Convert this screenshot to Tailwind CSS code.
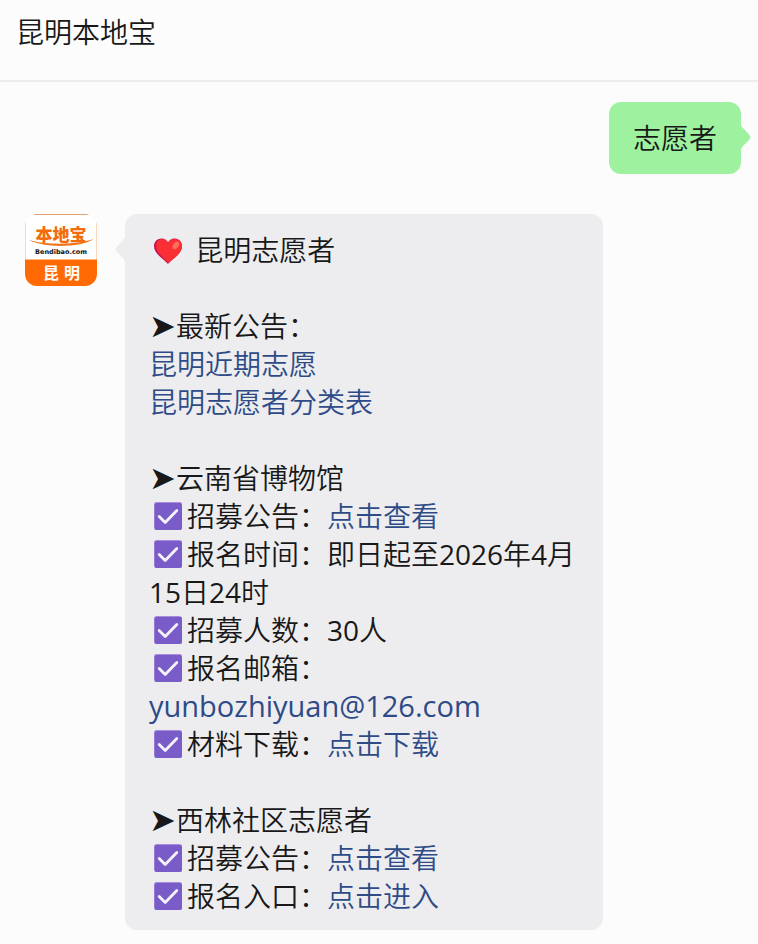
<!DOCTYPE html>
<html lang="zh-CN">
<head>
  <meta charset="UTF-8">
  <meta name="viewport" content="width=device-width, initial-scale=1.0">
  <title>昆明本地宝</title>
  <script src="https://cdn.jsdelivr.net/npm/@tailwindcss/browser@4"></script>
</head>
<body class="bg-[#fcfcfc] min-h-screen text-[#181818] text-[28px] leading-[38px] font-[350] font-['Open_Sans','Noto_Sans_CJK_SC',sans-serif]">

  <!-- Shared icons -->
  <svg class="hidden">
    <symbol id="check" viewBox="0 0 28 28">
      <rect width="28" height="28" rx="2.5" fill="#a98be0"/>
      <rect x="0.6" y="1" width="27.4" height="27" rx="2.2" fill="#7a5cc8"/>
      <path d="M5.200 14.500l6 6L22.800 8.500" fill="none" stroke="#f5f3fa" stroke-width="2.800" stroke-linecap="round" stroke-linejoin="round"/>
    </symbol>
  </svg>

  <header class="border-b-2 border-[#ededed] px-4 pt-[13px] pb-[29px]">
    <h1 class="font-[350]">昆明本地宝</h1>
  </header>

  <main class="pt-5 pb-3.5">

    <!-- Sent message -->
    <div class="flex justify-end pr-[17px]">
      <div class="relative bg-[#9ef29f] rounded-xl px-6 py-[17px]">
        志愿者
        <svg class="absolute left-full top-[22px] -ml-px w-[11px] h-7" viewBox="0 0 11 28" fill="#9ef29f">
          <path d="M0 0C1 2 2 3 4 5L9 10.500C11 12.500 11 14 9 16L3.500 21.500C1.500 23.500 1 25 0 28Z"/>
        </svg>
      </div>
    </div>

    <!-- Reply -->
    <div class="flex items-start gap-7 mt-10 pl-[25px] pr-[155px]">
      <svg class="shrink-0 size-[72px] rounded-xl" viewBox="0 0 72 72" role="img" aria-label="本地宝 昆明">
        <rect width="72" height="72" fill="#fff"/>
        <path d="M0.500 8V46M71.500 8V46" stroke="#f8d8c0"/>
        <path d="M8 0.500H64" stroke="#e0a070"/>
        <rect y="45.500" width="72" height="26.500" fill="#ff6a05"/>
        <text x="36" y="27" text-anchor="middle" font-family="Noto Sans CJK SC, sans-serif" font-weight="900" font-size="17" fill="#f36c0c">本地宝</text>
        <path d="M4 26C20 31 52 31 69 25C56 33.500 20 34.500 4 26Z" fill="#f07418"/>
        <text x="36" y="39.500" text-anchor="middle" font-family="DejaVu Sans, sans-serif" font-weight="700" font-size="6.5" fill="#111">Bendibao.com</text>
        <text x="26" y="65" text-anchor="middle" font-family="Noto Sans CJK SC, sans-serif" font-weight="700" font-size="16" fill="#fff">昆</text>
        <text x="47" y="65" text-anchor="middle" font-family="Noto Sans CJK SC, sans-serif" font-weight="700" font-size="16" fill="#fff">明</text>
      </svg>

      <div class="relative flex-1 min-w-0 bg-[#ededef] rounded-xl px-6 pt-[17px] pb-[15px]">
        <svg class="absolute right-full top-[22px] -mr-px w-[11px] h-7" viewBox="0 0 11 28" fill="#ededef">
          <path d="M11 0C10 2 9 3 7 5L2 10.500C0 12.500 0 14 2 16L7.500 21.500C9.500 23.500 10 25 11 28Z"/>
        </svg>

        <p>
          <svg class="inline-block align-middle w-7 h-[26px] ml-[5px] mr-1.5 -mt-1.5" viewBox="0 0 28 26">
            <path d="M14 26C11 22 0 16 0 8.200C0 3.500 3.500 0.500 7.500 0.500C10.500 0.500 13 2.200 14 4.500C15 2.200 17.500 0.500 20.500 0.500C24.500 0.500 28 3.500 28 8.200C28 16 17 22 14 26Z" fill="#c3115c"/>
            <path d="M14.600 25C12 21.500 2 15.500 2 8.300C2 4 4.500 1 8.300 1C11.200 1 13.200 2.500 14.200 5C15.200 2.500 17.500 0.700 20.500 0.700C24.500 0.700 28 3.600 28 8.200C28 16 17.500 21.500 14.600 25Z" fill="#f92f33"/>
            <ellipse cx="21.800" cy="7.500" rx="2.700" ry="4.300" transform="rotate(35 21.800 7.500)" fill="#fb6f5d"/>
          </svg>
          昆明志愿者
        </p>

        <section class="mt-[38px]">
          <h2 class="font-[350]"><span class="inline-block w-[27px] text-[32px] leading-none font-['DejaVu_Sans']">➤</span>最新公告：</h2>
          <p><a href="#" class="text-[#2e4b87]">昆明近期志愿</a></p>
          <p><a href="#" class="text-[#2e4b87]">昆明志愿者分类表</a></p>
        </section>

        <section class="mt-[38px]">
          <h2 class="font-[350]"><span class="inline-block w-[27px] text-[32px] leading-none font-['DejaVu_Sans']">➤</span>云南省博物馆</h2>
          <p><svg class="inline-block align-middle size-7 mx-[5px] -mt-2"><use href="#check"/></svg>招募公告：<a href="#" class="text-[#2e4b87]">点击查看</a></p>
          <p><svg class="inline-block align-middle size-7 mx-[5px] -mt-2"><use href="#check"/></svg>报名时间：即日起至<span class="font-normal">2026</span>年<span class="font-normal">4</span>月<span class="font-normal">15</span>日<span class="font-normal">24</span>时</p>
          <p><svg class="inline-block align-middle size-7 mx-[5px] -mt-2"><use href="#check"/></svg>招募人数：<span class="font-normal">30</span>人</p>
          <p><svg class="inline-block align-middle size-7 mx-[5px] -mt-2"><use href="#check"/></svg>报名邮箱：<br><a href="mailto:yunbozhiyuan@126.com" class="text-[#2e4b87] text-[29px] leading-none font-normal">yunbozhiyuan@126.com</a></p>
          <p><svg class="inline-block align-middle size-7 mx-[5px] -mt-2"><use href="#check"/></svg>材料下载：<a href="#" class="text-[#2e4b87]">点击下载</a></p>
        </section>

        <section class="mt-[38px]">
          <h2 class="font-[350]"><span class="inline-block w-[27px] text-[32px] leading-none font-['DejaVu_Sans']">➤</span>西林社区志愿者</h2>
          <p><svg class="inline-block align-middle size-7 mx-[5px] -mt-2"><use href="#check"/></svg>招募公告：<a href="#" class="text-[#2e4b87]">点击查看</a></p>
          <p><svg class="inline-block align-middle size-7 mx-[5px] -mt-2"><use href="#check"/></svg>报名入口：<a href="#" class="text-[#2e4b87]">点击进入</a></p>
        </section>
      </div>
    </div>

  </main>

</body>
</html>
